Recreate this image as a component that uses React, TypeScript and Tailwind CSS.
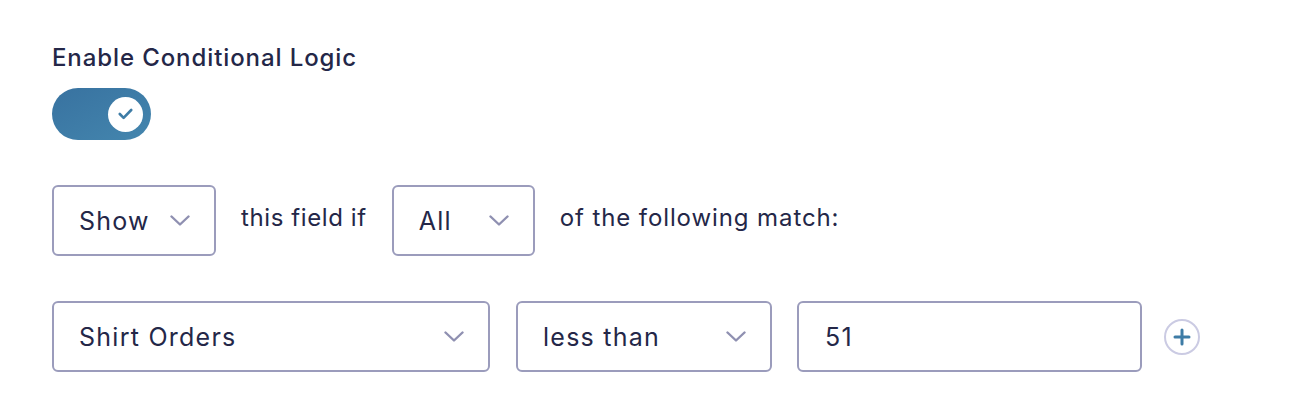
import { useState } from "react";

function Chevron() {
  return (
    <svg width="20" height="11" viewBox="0 0 20 11" fill="none" className="shrink-0">
      <path
        d="M1.5 1.5 L10 9.5 L18.5 1.5"
        stroke="#8f90b1"
        strokeWidth="2.4"
        strokeLinecap="round"
        strokeLinejoin="round"
      />
    </svg>
  );
}

function Select({ value, width }: { value: string; width: string }) {
  return (
    <div
      className={`flex h-[71px] ${width} shrink-0 items-center justify-between rounded-[6px] border-2 border-[#9b9cbc] bg-white pl-[25px] pr-[24px]`}
    >
      <span className="text-[25px] leading-[32px] tracking-[1.25px] text-[#242748]">{value}</span>
      <Chevron />
    </div>
  );
}

function Toggle() {
  const [on, setOn] = useState(true);
  return (
    <button
      onClick={() => setOn(!on)}
      className="flex h-[52px] w-[99px] items-center justify-end rounded-full bg-gradient-to-br from-[#3872a0] to-[#4486ae] pr-[8px]"
    >
      <span className="flex h-[35px] w-[35px] items-center justify-center rounded-full bg-white">
        {on && (
          <svg width="15" height="12" viewBox="0 0 15 12" fill="none">
            <path
              d="M1.8 6 L5.6 9.8 L13.2 2"
              stroke="#3e7ca6"
              strokeWidth="2.6"
              strokeLinecap="round"
              strokeLinejoin="round"
            />
          </svg>
        )}
      </span>
    </button>
  );
}

export default function App() {
  return (
    <div className="min-h-[420px] w-[1300px] bg-white pl-[52px] pt-[42px] font-['Inter',sans-serif] text-[#242748]">
      <div className="text-[24px] font-medium leading-[32px] tracking-[0.9px]">Enable Conditional Logic</div>
      <div className="mt-[14px]">
        <Toggle />
      </div>

      <div className="mt-[45px] flex items-center">
        <Select value="Show" width="w-[164px]" />
        <span className="mb-[5px] ml-[25px] text-[24px] leading-[32px] tracking-[0.6px]">this field if</span>
        <div className="ml-[25px]">
          <Select value="All" width="w-[143px]" />
        </div>
        <span className="mb-[5px] ml-[25px] text-[24px] leading-[32px] tracking-[0.9px]">of the following match:</span>
      </div>

      <div className="mt-[45px] flex items-center">
        <Select value="Shirt Orders" width="w-[438px]" />
        <div className="ml-[26px]">
          <Select value="less than" width="w-[256px]" />
        </div>
        <div className="ml-[25px] flex h-[71px] w-[345px] items-center rounded-[6px] border-2 border-[#9b9cbc] pl-[26px]">
          <span className="text-[25px] leading-[32px] tracking-[1.25px]">51</span>
        </div>
        <button className="ml-[22px] flex h-[36px] w-[36px] items-center justify-center rounded-full border-2 border-[#cbcbe3] bg-white">
          <svg width="18" height="18" viewBox="0 0 18 18" fill="none">
            <path d="M9 2 V16 M2 9 H16" stroke="#3e7ca6" strokeWidth="3" strokeLinecap="round" />
          </svg>
        </button>
      </div>
    </div>
  );
}
